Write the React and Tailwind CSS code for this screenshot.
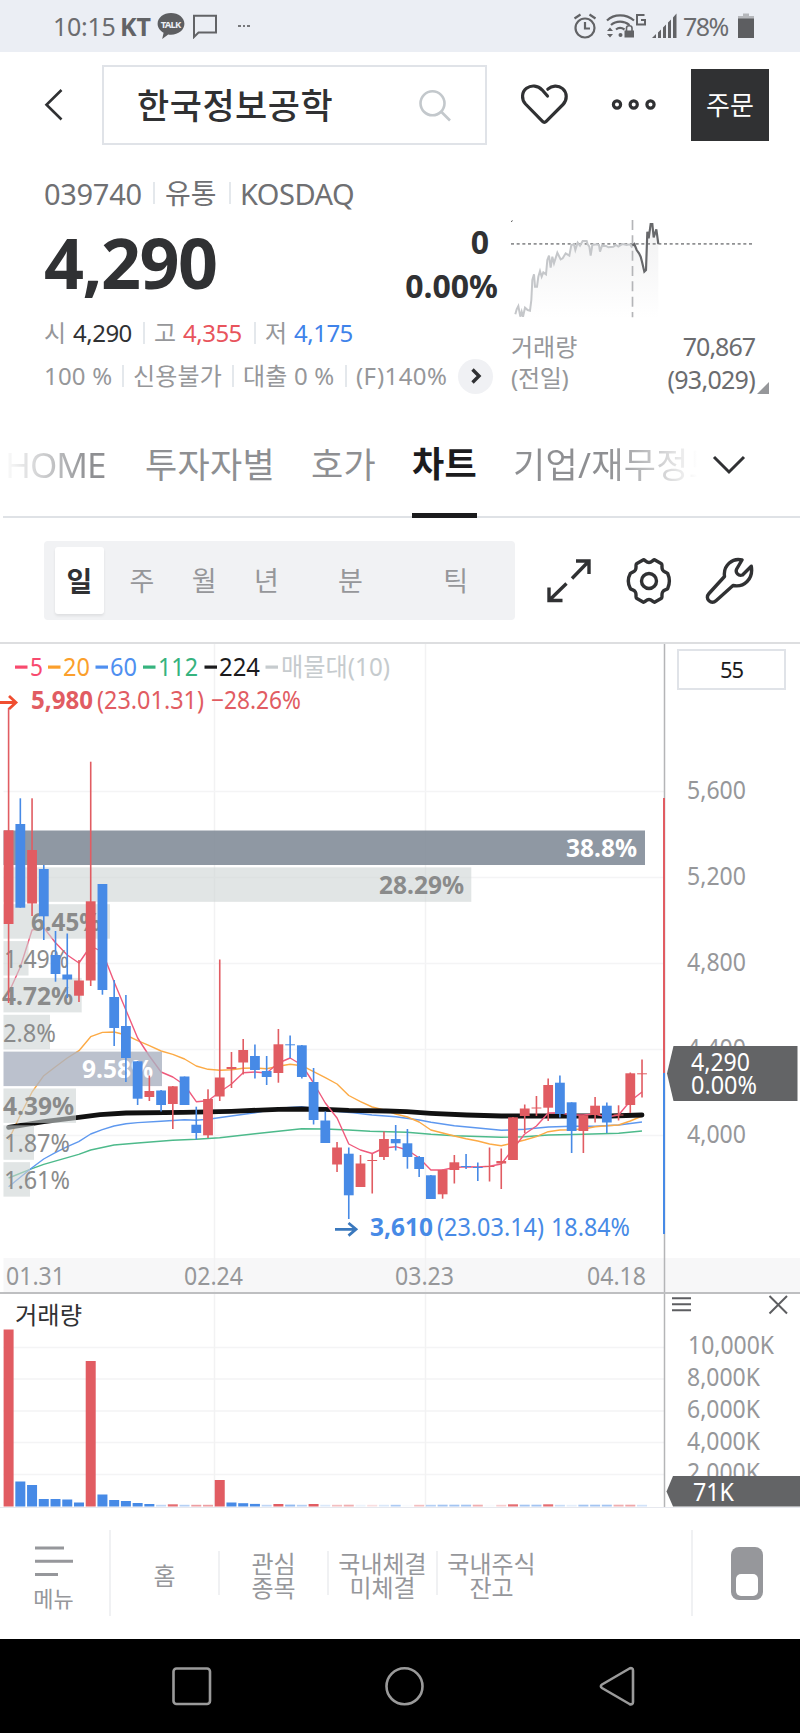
const RED = '#e15c62'
const BLUE = '#478ae6'

// colour, high, body top, body bottom, low
const candles = [
  ['r', 708, 830.3, 924, 1003], ['b', 798.3, 824, 907.7, 907.7], ['r', 798.3, 850, 903.5, 916],
  ['b', 865, 869, 916.3, 940], ['b', 931, 955, 974, 981.7], ['b', 933.5, 974.5, 979.5, 998],
  ['r', 960, 980.5, 995.7, 1002], ['r', 761.7, 901.3, 980.5, 986], ['b', 884, 884, 990, 994.7],
  ['b', 980, 997, 1028, 1046], ['b', 995, 1026, 1058, 1082], ['b', 1061, 1061.3, 1098.7, 1105],
  ['r', 1075.5, 1091, 1097, 1101], ['b', 1090, 1090.5, 1105, 1111.5], ['r', 1086, 1086.3, 1104, 1129],
  ['b', 1076.5, 1076.5, 1105, 1105], ['b', 1106.7, 1124.7, 1133, 1139.5], ['r', 1089.3, 1099, 1135.3, 1138],
  ['r', 959.5, 1077.5, 1096.5, 1101], ['r', 1052, 1067, 1069, 1088], ['r', 1039, 1050, 1062.5, 1074.5],
  ['b', 1044.5, 1056, 1070, 1078.5], ['b', 1056, 1071, 1077, 1085], ['r', 1029, 1044.3, 1073, 1082.7],
  ['b', 1035.5, 1044.3, 1045.3, 1058], ['b', 1045, 1045.3, 1077, 1078.5], ['b', 1068, 1082, 1120, 1124.5],
  ['b', 1111.5, 1120.5, 1143, 1143], ['r', 1142, 1147.5, 1164.5, 1172], ['b', 1147.5, 1153.7, 1195.3, 1219],
  ['r', 1155, 1163.5, 1187, 1187], ['r', 1154, 1160, 1161, 1193.5], ['r', 1131.5, 1139, 1157, 1160],
  ['b', 1125, 1139, 1143.3, 1150.5], ['b', 1129, 1143.3, 1157, 1168.7], ['b', 1156, 1157, 1169, 1177],
  ['b', 1175, 1175.3, 1199, 1199], ['r', 1169.5, 1170, 1194.3, 1198.7], ['r', 1155, 1162.3, 1170, 1183.5],
  ['b', 1154, 1166, 1167, 1169], ['b', 1162.5, 1167, 1168, 1181], ['r', 1147.5, 1166, 1167, 1181.5],
  ['r', 1148.5, 1161, 1163.5, 1189], ['r', 1117, 1117.3, 1160, 1160], ['r', 1104.5, 1108.5, 1116, 1133],
  ['r', 1096, 1107.5, 1108.5, 1116], ['r', 1078.5, 1085, 1107.7, 1121], ['b', 1075.5, 1082.7, 1114, 1117.5],
  ['b', 1102.3, 1102.3, 1131, 1153], ['r', 1115, 1115.3, 1131, 1153], ['r', 1097, 1105.7, 1115, 1122.5],
  ['b', 1102.5, 1105.7, 1122.5, 1133], ['r', 1105.3, 1114.5, 1115.5, 1120.5], ['r', 1072.5, 1073.3, 1105, 1113],
  ['r', 1059.5, 1073.3, 1074.3, 1097.5],
]

const ma5 = [
  993, 967, 930, 927.7, 942.7, 955, 963, 946, 952, 982, 1010, 1038, 1056, 1072, 1077, 1085, 1101.7, 1100.7, 1092,
  1084, 1072.7, 1072, 1073, 1063, 1058, 1065, 1083, 1103, 1118, 1144, 1150, 1153.5, 1148, 1146.7, 1150, 1158, 1170,
  1170, 1167.5, 1166.7, 1167, 1166.3, 1164, 1149, 1134, 1126, 1113, 1112.7, 1115, 1115, 1114, 1117, 1115, 1101, 1092,
]
const ma20 = [
  1140, 1115, 1092, 1075.7, 1066.7, 1058, 1050.7, 1036.7, 1032.4, 1032, 1035, 1040.7, 1045.7, 1051, 1054.3, 1059,
  1066, 1069.3, 1070.2, 1069.7, 1068.3, 1068, 1068.7, 1066.3, 1064.3, 1065.7, 1071.7, 1077.7, 1084, 1095.5, 1101.7,
  1107, 1110, 1114, 1117, 1122, 1130, 1133, 1136, 1138.7, 1141, 1144, 1145.7, 1143, 1140, 1136.7, 1131.7, 1130,
  1129.7, 1129, 1126.7, 1125.7, 1125, 1121, 1116,
]
const ma60 =
  '8.6,1186.7 32,1167.7 43.7,1159 55.3,1152.7 67.3,1146.7 78.7,1141.7 90.7,1134 102.3,1129.7 114,1126 126,1123.7 137.7,1122.6 161,1121.3 184.5,1119.7 196.3,1120.3 208,1119.3 231.3,1116 255,1112.7 278.3,1108.3 301.7,1106.7 325,1110.5 353.3,1112.7 372,1115 395.7,1116.7 419.3,1120 431,1122.3 454.3,1125.7 478,1128 501.3,1130.3 524.7,1129.3 548.3,1127 571.7,1126.3 595,1126.3 618.7,1125 642,1122'
const ma112 =
  '8.6,1178 32,1168.7 43.7,1164.3 78.7,1154.3 90.7,1150 114,1145 137.7,1143 172.7,1140.3 196.3,1139.3 219.7,1137.7 255,1133.7 301.7,1128.7 325.3,1129 348.7,1130 370,1131.3 406.7,1132.3 431,1134.3 454.3,1135.7 501.3,1137.3 524.7,1136.7 548.3,1135 583.3,1134.3 618.7,1133.3 642,1131'
const ma224 =
  '8.6,1127.3 43.7,1121.7 78.7,1117.3 100,1114.7 126,1113 183.3,1112.3 231.3,1111.3 278.3,1109.3 301.7,1109 325.3,1109.3 348.7,1110.3 386.7,1111 406.7,1111.7 431,1113.3 466.7,1115 501.3,1116 536.7,1116 610,1116 642,1115'

// share of volume by price band
const profile = [
  { pct: '38.8%', right: 645, fill: '#7f8a96', o: 0.88, x: 566, w: 71, text: '#ffffff', bold: true },
  { pct: '28.29%', right: 471.3, x: 379, w: 85, bold: true },
  { pct: '6.45%', right: 110, x: 31, w: 70, bold: true },
  { pct: '1.49%', right: 28.5, x: 4, w: 65 },
  { pct: '4.72%', right: 81.7, x: 2, w: 71, bold: true },
  { pct: '2.8%', right: 50, x: 3, w: 53 },
  { pct: '9.58%', right: 162, fill: '#aab1c1', o: 0.8, x: 82, w: 71, text: '#ffffff', bold: true },
  { pct: '4.39%', right: 76, x: 3, w: 71, bold: true },
  { pct: '1.87%', right: 34, x: 4, w: 66 },
  { pct: '1.61%', right: 30, x: 4, w: 66 },
]

// colour, height, opacity
const volumes = [
  ['r', 177, 1], ['b', 25, 1], ['b', 21.5, 1], ['b', 7.5, 1], ['b', 7.5, 1], ['b', 7, 1], ['b', 4, 1], ['r', 145.5, 1],
  ['b', 12, 1], ['b', 6.5, 1], ['b', 5.5, 1], ['b', 3.5, 1], ['b', 2.5, 1], ['b', 1.7, 0.35], ['r', 2.2, 0.9],
  ['b', 1.7, 0.4], ['r', 1.7, 0.6], ['r', 1.7, 0.6], ['r', 26.5, 1], ['b', 4, 1], ['b', 3.3, 1], ['b', 2.6, 1],
  ['b', 1.7, 0.35], ['r', 2.5, 1], ['b', 1.9, 0.6], ['b', 1.7, 0.4], ['r', 2.5, 1], ['b', 1.7, 0.2], ['r', 1.7, 0.4],
  ['r', 1.8, 0.5], ['b', 1.7, 0.1], ['r', 1.7, 0.2], ['b', 1.7, 0.2], ['b', 1.7, 0.45], ['b', 1.7, 0.03],
  ['r', 1.7, 0.4], ['b', 1.7, 0.4], ['b', 1.8, 0.5], ['b', 1.8, 0.5], ['b', 1.8, 0.5], ['r', 1.8, 0.5],
  ['b', 1.7, 0.03], ['r', 1.7, 0.3], ['r', 2.2, 0.9], ['b', 1.8, 0.5], ['b', 1.8, 0.5], ['r', 2.2, 0.9],
  ['b', 1.7, 0.3], ['b', 1.7, 0.15], ['b', 1.8, 0.5], ['b', 1.8, 0.5], ['b', 1.8, 0.5], ['r', 1.8, 0.5],
  ['r', 1.8, 0.55], ['b', 1.7, 0.25],
]

const cx = (i) => 8.6 + 11.73 * i
const line = (ys) => ys.map((y, i) => `${cx(i)},${y}`).join(' ')

function Label({ x, y, w, fill = '#96979a', bold, size = 25, children }) {
  return (
    <text x={x} y={y} textLength={w} lengthAdjust="spacingAndGlyphs" fill={fill} fontSize={size} fontWeight={bold ? 700 : 400}>
      {children}
    </text>
  )
}

function Sep() {
  return <i className="block w-[2px] h-[22px] bg-[#e4e8ec]" />
}

function StatusBar() {
  return (
    <div className="h-[52px] bg-[#ebeef4] flex items-center pl-[53px] pr-[45px] text-[25px] leading-none text-[#6b6c6f]">
      <span className="w-[67px] tracking-[-0.3px]">10:15</span>
      <span className="w-[37px] font-bold text-[#626366]">KT</span>
      <svg width="28" height="28" viewBox="0 0 28 28">
        <path d="M14 1C6.5 1 .6 5.700 .6 11.800c0 3.900 2.400 7.100 6 9L5.200 27l6-4.500c.9.100 1.800.200 2.800.200 7.500 0 13.400-4.800 13.400-10.900S21.500 1 14 1z" fill="#5d5e61" />
        <text x="3.800" y="15.500" textLength="20.500" fontSize="9.500" fontWeight="700" fill="#ebeef4">TALK</text>
      </svg>
      <svg className="ml-[7px]" width="26" height="26" viewBox="0 0 26 26" fill="none" stroke="#626366" strokeWidth="2">
        <path d="M2 2.800h22v16.700H6.500L2 24z" />
      </svg>
      <span className="ml-[20px] flex gap-[2px]">
        <i className="size-[2.500px] bg-[#77787b]" />
        <i className="size-[2.500px] bg-[#77787b]" />
        <i className="size-[2.500px] bg-[#77787b]" />
      </span>
      <svg className="ml-auto" width="24" height="28" viewBox="0 0 24 28" fill="none" stroke="#626366" strokeWidth="2.200">
        <circle cx="12" cy="16" r="9.500" />
        <path d="M12 10v6.500h5M1.500 6.500l6-4M22.500 6.500l-6-4" />
      </svg>
      <svg className="ml-[9px]" width="42" height="28" viewBox="0 0 42 28" fill="none" stroke="#626366" strokeWidth="2.200">
        <path d="M1 8.500C8 1.700 20 1.700 28 8.500M5 13C10 8.500 18 8.500 23.500 13M10 17.500c2.500-2 5.500-2 8.500 0" />
        <circle cx="14.500" cy="23" r="2" fill="#626366" stroke="none" />
        <path d="M1 19l3-3.500L7 19zM1 22l3 3.500L7 22z" fill="#626366" stroke="none" />
        <path d="M18.500 18.500h9.500v7h-9.500z" fill="#626366" stroke="none" />
        <path d="M20.500 19v-3c0-3 5.500-3 5.500 0v3" strokeWidth="1.600" />
        <path d="M38.500 3h-7.500v9.500h8V8h-4" strokeWidth="2" />
      </svg>
      <svg className="ml-[4px]" width="26" height="28" viewBox="0 0 26 28" fill="#626366">
        <path d="M0 26l4-4v4zM6 20.500l3-3V26H6zM11 15.500l3-3V26h-3zM16 10.500l3-3V26h-3zM21 5.500l3.500-4V26H21z" />
      </svg>
      <span className="ml-[5px] w-[48px] tracking-[-1.500px]">78%</span>
      <svg className="ml-[6px]" width="18" height="28" viewBox="0 0 18 28">
        <path d="M6 1.500h6V4h5v3H1V4h5z" fill="#b5b7bb" />
        <path d="M1 6.500h16V26H1z" fill="#5d5e61" />
      </svg>
    </div>
  )
}

function Header() {
  return (
    <div className="h-[106px] pt-[13px] flex items-start">
      <svg className="mt-[22px] ml-[43px]" width="22" height="36" viewBox="0 0 22 36" fill="none" stroke="#303133" strokeWidth="2.600">
        <path d="M18.500 3L3.500 17.700L18.500 32.500" />
      </svg>
      <div className="ml-[37px] w-[385px] h-[80px] border-2 border-[#e0e3e8] flex items-center pl-[33px] pr-[33px]">
        <span className="text-[35px] leading-none font-medium tracking-[0.5px] text-[#303133]">한국정보공학</span>
        <svg className="ml-auto mt-[2px]" width="34" height="34" viewBox="0 0 34 34" fill="none" stroke="#c3c8cc" strokeWidth="2.600">
          <circle cx="14.500" cy="14.300" r="12" />
          <path d="M23 22.500l9 9" />
        </svg>
      </div>
      <svg className="ml-[32px] mt-[17px]" width="52" height="44" viewBox="0 0 52 44" fill="none" stroke="#303133" strokeWidth="3.200" strokeLinecap="round" strokeLinejoin="round">
        <path d="M28.500 14l-5.500-6.200C19 3.600 12.500 2.600 7.500 6.300 2.500 10 2.300 17.500 6.500 22L23.500 39.300c1.200 1.300 2.500 1.300 3.700 0L44 22.500c4.500-4.700 4.200-12-.4-15.900-4.600-3.800-10.700-3.200-14.800 .6" />
      </svg>
      <svg className="ml-[40px] mt-[31px]" width="48" height="16" viewBox="0 0 48 16" fill="none" stroke="#303133" strokeWidth="3.200">
        <circle cx="6" cy="8.500" r="3.600" />
        <circle cx="22.700" cy="8.500" r="3.600" />
        <circle cx="39.500" cy="8.500" r="3.600" />
      </svg>
      <button className="ml-[32px] mt-[4px] w-[78px] h-[72px] bg-[#303133] text-white text-[26px] leading-none flex items-center justify-center">
        주문
      </button>
    </div>
  )
}

const spark =
  '346,313 350,298 355,288 361,320 365,305 369,320 375,293 383,300 390,302 394,270 397,210 402,193 405,230 411,230 415,200 420,183 425,200 430,187 438,193 442,150 447,137 452,173 457,140 462,160 472,128 482,148 488,145 497,130 508,137 514,105 522,103 526,120 533,98 540,107 548,93 560,93 563,103 568,110 572,137 577,105 590,103 597,105 600,125 606,107 618,108 625,112 640,110 648,105 655,110 668,102 680,105 690,103 697,113'
const sparkToday =
  '697,107 703,102 710,120 717,130 722,140 726,155 733,185 738,180 742,65 746,85 752,42 757,42 761,82 769,58 775,102'

function Summary() {
  return (
    <div className="h-[244px] flex pl-[44px]">
      <div className="w-[454px] pt-[19px]">
        <div className="h-[32px] flex items-center text-[29px] leading-none text-[#6f7073]">
          <span className="w-[109px] tracking-[-0.3px]">039740</span>
          <Sep />
          <span className="w-[74px] pl-[10px] text-[28px]">유통</span>
          <Sep />
          <span className="pl-[9px] tracking-[-0.5px]">KOSDAQ</span>
        </div>
        <div className="flex h-[102px] justify-between text-[#303133] font-bold leading-none">
          <span className="pt-[18px] text-[70px] tracking-[-1.500px]">4,290</span>
          <div className="pt-[15px] text-right text-[32px]">
            <p className="h-[44px] pt-[2px] pr-[9px]">0</p>
            <p className="pt-[2px]">0.00%</p>
          </div>
        </div>
        <div className="mt-[3px] h-[38px] flex items-center text-[24px] leading-none tracking-[-0.5px] text-[#96979a]">
          <span className="w-[29px]">시</span>
          <span className="w-[70px] text-[#303133]">4,290</span>
          <Sep />
          <span className="w-[38px] pl-[9px]">고</span>
          <span className="w-[71px] text-[#e8545c]">4,355</span>
          <Sep />
          <span className="w-[38px] pl-[9px]">저</span>
          <span className="text-[#3f83ea]">4,175</span>
        </div>
        <div className="mt-[4px] h-[40px] flex items-center text-[24px] leading-none tracking-[0.2px] text-[#96979a]">
          <span className="w-[78px]">100 %</span>
          <Sep />
          <span className="w-[108px] pl-[9px] tracking-[0.2px]">신용불가</span>
          <Sep />
          <span className="w-[111px] pl-[9px]">대출 0 %</span>
          <Sep />
          <span className="w-[111px] shrink-0 pl-[9px] tracking-[0.4px]">(F)140%</span>
          <span className="size-[35px] shrink-0 rounded-full bg-[#f0f1f4] flex items-center justify-center">
            <svg width="12" height="16" viewBox="0 0 12 16" fill="none" stroke="#303133" strokeWidth="3.400">
              <path d="M2.500 1.500L9 8L2.500 14.500" />
            </svg>
          </span>
        </div>
      </div>
      <div className="ml-[12px] w-[260px] pt-[60px]">
        <svg width="246" height="100" viewBox="330 24 738 300" fill="none">
          <defs>
            <linearGradient id="shade" x1="0" y1="0" x2="0" y2="1">
              <stop offset="0" stopColor="#f1f1f2" />
              <stop offset="1" stopColor="#ffffff" />
            </linearGradient>
          </defs>
          <path d={`M346,324 L${spark.replaceAll(' ', ' L')} L${sparkToday.replaceAll(' ', ' L')} L775,324z`} fill="url(#shade)" />
          <path d="M333 101.500H1062" stroke="#909193" strokeWidth="5.500" strokeDasharray="9 8" />
          <path d="M697.500 30V322" stroke="#b4b5b8" strokeWidth="5" strokeDasharray="30 16" />
          <path d="M333 35l5-3" stroke="#555" strokeWidth="3" />
          <polyline points={spark} stroke="#c5c7ca" strokeWidth="6" />
          <polyline points={sparkToday} stroke="#67686b" strokeWidth="6.500" />
        </svg>
        <div className="mt-[13px] w-[246px] flex justify-between text-[24px] leading-[32px] text-[#96979a]">
          <div className="pl-px">
            <p>거래량</p>
            <p className="-mt-px tracking-[-0.3px]">(전일)</p>
          </div>
          <div className="relative -mt-px pr-px text-right text-[25px] leading-[33px] tracking-[-1px] text-[#6b6c6f]">
            <p>70,867</p>
            <p className="tracking-[-0.7px]">(93,029)</p>
            <svg className="absolute -right-[13px] bottom-[2px]" width="12" height="12">
              <path d="M12 0V12H0z" fill="#96979a" />
            </svg>
          </div>
        </div>
      </div>
    </div>
  )
}

function Tabs() {
  return (
    <div className="h-[116px]">
      <div className="ml-[3px] h-[116px] border-b-2 border-[#dfe2e6] flex items-center text-[35px] leading-none tracking-[0.3px] text-[#8e8f92]">
        <span className="w-[142px] pt-[10px] pl-[2px] text-[35px] tracking-[-1px] bg-gradient-to-r from-white via-[#b9babc] via-40% to-[#8e8f92] to-60% bg-clip-text text-transparent">HOME</span>
        <span className="w-[166px] pt-[10px]">투자자별</span>
        <span className="w-[101px] pt-[10px]">호가</span>
        <span className="w-[65px] h-[118px] pt-[46px] border-b-[5px] border-[#1b1b1d] font-bold text-[#1b1b1d] whitespace-nowrap">차트</span>
        <span className="ml-[36px] w-[188px] pt-[10px] overflow-hidden whitespace-nowrap bg-gradient-to-r from-[#8e8f92] from-50% to-white to-98% bg-clip-text text-transparent">
          기업/재무정보
        </span>
        <svg className="ml-[11px] mt-[12px]" width="34" height="22" viewBox="0 0 34 22" fill="none" stroke="#303133" strokeWidth="3">
          <path d="M2 3l15 15L32 3" />
        </svg>
      </div>
    </div>
  )
}

function PeriodBar() {
  return (
    <div className="h-[124px] pt-[23px] pl-[44px] flex">
      <div className="w-[471px] h-[79px] rounded-[4px] bg-[#f1f2f4] flex items-center text-[27px] leading-none text-[#96979a]">
        <span className="ml-[11px] w-[49px] h-[67px] bg-white rounded-[3px] shadow-[0_2px_3px_rgba(0,0,0,0.08)] flex items-center justify-center font-bold text-[28px] text-[#303133]">일</span>
        <span className="w-[76px] text-center">주</span>
        <span className="w-[49px] text-center">월</span>
        <span className="w-[76px] text-center">년</span>
        <span className="w-[92px] text-center">분</span>
        <span className="w-[119px] text-center">틱</span>
      </div>
      <svg className="ml-[30px] mt-[16px]" width="48" height="48" viewBox="0 0 48 48" fill="none" stroke="#303133" strokeWidth="3.400">
        <path d="M31 4h13v13M44 4L27 21.500M21.500 26.500L4 43.500M4 30.500V43.500h13.500" />
      </svg>
      <svg className="ml-[32px] mt-[16px]" width="48" height="48" viewBox="0 0 48 48" fill="none" stroke="#303133" strokeWidth="3.400" strokeLinejoin="round">
        <path d="M18.500 2.800c1.500 0 2.800 2.700 5.500 2.700s4-2.700 5.500-2.700l7 4c1.200 1-.3 3.700 1.100 6.200 1.300 2.300 4.300 2.200 5.100 3.500 2 4.500 2 10.500 0 15-.8 1.300-3.800 1.200-5.100 3.500-1.400 2.500 .1 5.200-1.100 6.200l-7 4c-1.500 0-2.800-2.700-5.500-2.700s-4 2.700-5.500 2.700l-7-4c-1.200-1 .3-3.700-1.100-6.200C9.100 32.700 6.100 32.800 5.300 31.500c-2.400-4.500-2.400-10.500 0-15C6.100 15.200 9.100 15.300 10.400 13c1.400-2.500-.1-5.200 1.100-6.200z" />
        <circle cx="24" cy="24" r="7.500" />
      </svg>
      <svg className="ml-[32px] mt-[16px]" width="50" height="48" viewBox="0 0 50 48" fill="none" stroke="#303133" strokeWidth="3.400" strokeLinejoin="round">
        <path d="M37 3C28 .500 18 8 19.500 19.500L4 36.500c-2.300 2.500-2 5.500 0 7.300s4.800 2 7.300-.4L28 28.500c11 2.300 20.500-6.500 18.300-19.300L37.500 18c-4 1.500-7.500-2.500-5.800-6z" />
      </svg>
    </div>
  )
}

const legend = [
  { name: '5', color: '#f84a6e', dash: 15, x: 30, w: 13 },
  { name: '20', color: '#fb9f2c', dash: 48, x: 63, w: 27 },
  { name: '60', color: '#4f8ff0', dash: 95.5, x: 110, w: 27 },
  { name: '112', color: '#36b37e', dash: 143, x: 158, w: 40 },
  { name: '224', color: '#1b1b1d', dash: 204.5, x: 219, w: 41 },
  { name: '매물대(10)', color: '#c6cbce', dash: 265.5, x: 281, w: 109 },
]

function PriceChart() {
  return (
    <div className="h-[650px] border-t-2 border-[#dddee0] flex">
      <svg width="666" height="648" viewBox="0 644 666 648">
        <path d="M3.500 1258H666V1292H3.500z" fill="#f7f7f8" />
        <path d="M214.500 644V1292M425.500 644V1292" stroke="#f2f2f3" strokeWidth="1.500" />
        <path d="M3.500 791.500H664M3.500 877.500H664M3.500 963.500H664M3.500 1049.500H664M3.500 1135.500H664" stroke="#f4f4f5" strokeWidth="1.500" />
        <g fill="none" strokeWidth="1.400" strokeLinejoin="round">
          <polyline points={ma112} stroke="#4dba8b" />
          <polyline points={ma60} stroke="#5e98ef" />
          <polyline points={line(ma20)} stroke="#fcaa45" />
          <polyline points={ma224} stroke="#111111" strokeWidth="4.800" strokeLinecap="round" />
          <polyline points={line(ma5)} stroke="#ef5a7c" />
        </g>
        {profile.map((p, i) => (
          <g key={p.pct}>
            <rect x="3.500" y={830.5 + i * 36.85} width={p.right - 3.5} height="34.500" fill={p.fill || '#cdd3d4'} opacity={p.o || 0.6} />
            <Label x={p.x} y={857.3 + i * 36.85} w={p.w} fill={p.text || '#8a8b8b'} bold={p.bold}>{p.pct}</Label>
          </g>
        ))}
        {candles.map(([c, high, top, bottom, low], i) => (
          <g key={i} fill={c === 'r' ? RED : BLUE}>
            <rect x={cx(i) - 0.8} y={high} width="1.600" height={low - high} />
            <rect x={cx(i) - 4.9} y={top} width="9.800" height={bottom - top} />
          </g>
        ))}
        {legend.map((l) => (
          <g key={l.name}>
            <rect x={l.dash} y="665.500" width="12.500" height="3.200" fill={l.color} />
            <Label x={l.x} y={675.7} w={l.w} fill={l.color}>{l.name}</Label>
          </g>
        ))}
        <path d="M0 702.500H16M9 696l7 6.500-7 6.500" fill="none" stroke="#f04e30" strokeWidth="2.800" />
        <Label x={31} y={709.3} w={62} fill={RED} bold>5,980</Label>
        <Label x={97} y={709.3} w={107} fill={RED}>(23.01.31)</Label>
        <Label x={211} y={709.3} w={90} fill={RED}>−28.26%</Label>
        <path d="M335 1229.300H356M348.500 1223l7.500 6.300-7.500 6.300" fill="none" stroke="#3a78bd" strokeWidth="2.800" />
        <Label x={370} y={1236} w={63} fill={BLUE} bold>3,610</Label>
        <Label x={437} y={1236} w={107} fill={BLUE}>(23.03.14)</Label>
        <Label x={551} y={1236} w={79} fill={BLUE}>18.84%</Label>
        <Label x={6} y={1285.3} w={59}>01.31</Label>
        <Label x={184} y={1285.3} w={59}>02.24</Label>
        <Label x={395} y={1285.3} w={59}>03.23</Label>
        <Label x={587} y={1285.3} w={59}>04.18</Label>
        <path d="M664.500 644V1292" stroke="#b4b5b7" strokeWidth="1.500" />
        <path d="M664 798V1073" stroke={RED} strokeWidth="2" />
        <path d="M664 1073V1234" stroke={BLUE} strokeWidth="2" />
      </svg>
      <div className="relative w-[134px]">
        <svg width="134" height="648" viewBox="666 644 134 648">
          <path d="M666 1258H800V1292H666z" fill="#f7f7f8" />
          {['5,600', '5,200', '4,800', '4,400', '4,000'].map((p, i) => (
            <Label key={p} x={687} y={798.5 + i * 86} w={59}>{p}</Label>
          ))}
          <path d="M667 1073.500L673.500 1046H797.500V1101H673.500z" fill="#636466" />
          <Label x={691} y={1071} w={59} fill="#ffffff">4,290</Label>
          <Label x={691} y={1093.5} w={66} fill="#ffffff">0.00%</Label>
        </svg>
        <div className="absolute left-[11px] top-[5px] w-[109px] h-[41px] pb-[2px] border-2 border-[#e0e3e8] bg-white flex items-center justify-center text-[22px] leading-none tracking-[-1px] text-[#1b1b1d]">55</div>
      </div>
    </div>
  )
}

function VolumeChart() {
  return (
    <div className="h-[216px] border-t-2 border-[#bebfc1] border-b border-b-[#e6e8ee]">
      <svg width="800" height="213" viewBox="0 1294 800 213">
        <path d="M3.500 1347.500H664M3.500 1379H664M3.500 1411H664M3.500 1442.500H664M3.500 1474.500H664" stroke="#f4f4f5" strokeWidth="1.500" />
        <path d="M214.500 1292V1507M425.500 1292V1507" stroke="#f2f2f3" strokeWidth="1.500" />
        {volumes.map(([c, h, o], i) => (
          <rect key={i} x={cx(i) - 5} y={1506.5 - h} width="10" height={h} opacity={o} fill={c === 'r' ? RED : BLUE} />
        ))}
        <Label x={15} y={1323.5} w={67} fill="#303133" size={24}>거래량</Label>
        <path d="M664.500 1292V1507" stroke="#b4b5b7" strokeWidth="1.500" />
        <path d="M672 1298.300h19M672 1304.300h19M672 1310.300h19" stroke="#5d5e61" strokeWidth="2" />
        <path d="M769.500 1296l17.500 17.500M787 1296l-17.500 17.500" stroke="#5d5e61" strokeWidth="2" />
        <Label x={688} y={1354} w={86}>10,000K</Label>
        {['8,000K', '6,000K', '4,000K', '2,000K'].map((v, i) => (
          <Label key={v} x={687} y={1386 + i * 31.8} w={73}>{v}</Label>
        ))}
        <path d="M666.500 1491.500L673 1476H800V1506.500H673z" fill="#636466" />
        <Label x={693} y={1500.5} w={41} fill="#ffffff">71K</Label>
      </svg>
    </div>
  )
}

function BottomBar() {
  return (
    <div className="h-[131px] flex items-center pb-[1px] text-[24px] leading-[24px] text-[#96979b] text-center">
      <div className="w-[109px] pr-[2px] flex flex-col items-center pt-[8px]">
        <svg width="40" height="32" viewBox="0 0 40 32" stroke="#96979b" strokeWidth="3">
          <path d="M1 3h29M1 16.300h38M1 29.500h23" />
        </svg>
        <span className="mt-[9px] text-[22px]">메뉴</span>
      </div>
      <i className="w-[2px] h-[86px] bg-[#f0f1f3]" />
      <span className="w-[107px] pt-[6px]">홈</span>
      <i className="w-[2px] h-[44px] bg-[#f0f1f3]" />
      <span className="w-[107px] pt-[6px]">관심<br />종목</span>
      <i className="w-[2px] h-[44px] bg-[#f0f1f3]" />
      <span className="w-[107px] pt-[6px]">국내체결<br />미체결</span>
      <i className="w-[2px] h-[44px] bg-[#f0f1f3]" />
      <span className="w-[107px] pt-[6px]">국내주식<br />잔고</span>
      <i className="ml-[146px] w-[2px] h-[86px] bg-[#f0f1f3]" />
      <div className="ml-[38px] w-[32px] h-[53px] rounded-[8px] bg-[#96979b] px-[5px] pt-[27px]">
        <div className="w-[22px] h-[22px] rounded-[5px] bg-white" />
      </div>
    </div>
  )
}

function SystemNav() {
  return (
    <div className="h-[94px] bg-black">
      <svg width="800" height="94" viewBox="0 1639 800 94" fill="none" stroke="#9a9a9a" strokeWidth="2.600" strokeLinejoin="round">
        <rect x="173.500" y="1668.500" width="36.500" height="35.500" rx="3" />
        <circle cx="404.500" cy="1686.300" r="18" />
        <path d="M602 1684.500L629.500 1668.500c2-1 3.500 0 3.500 2v31.500c0 2-1.500 3-3.500 2L602 1688c-1.500-1-1.500-2.500 0-3.500z" />
      </svg>
    </div>
  )
}

export default function App() {
  return (
    <div className="w-[800px] h-[1733px] bg-white overflow-hidden font-['Noto_Sans','Noto_Sans_CJK_KR',sans-serif]">
      <StatusBar />
      <Header />
      <Summary />
      <Tabs />
      <PeriodBar />
      <PriceChart />
      <VolumeChart />
      <BottomBar />
      <SystemNav />
    </div>
  )
}
